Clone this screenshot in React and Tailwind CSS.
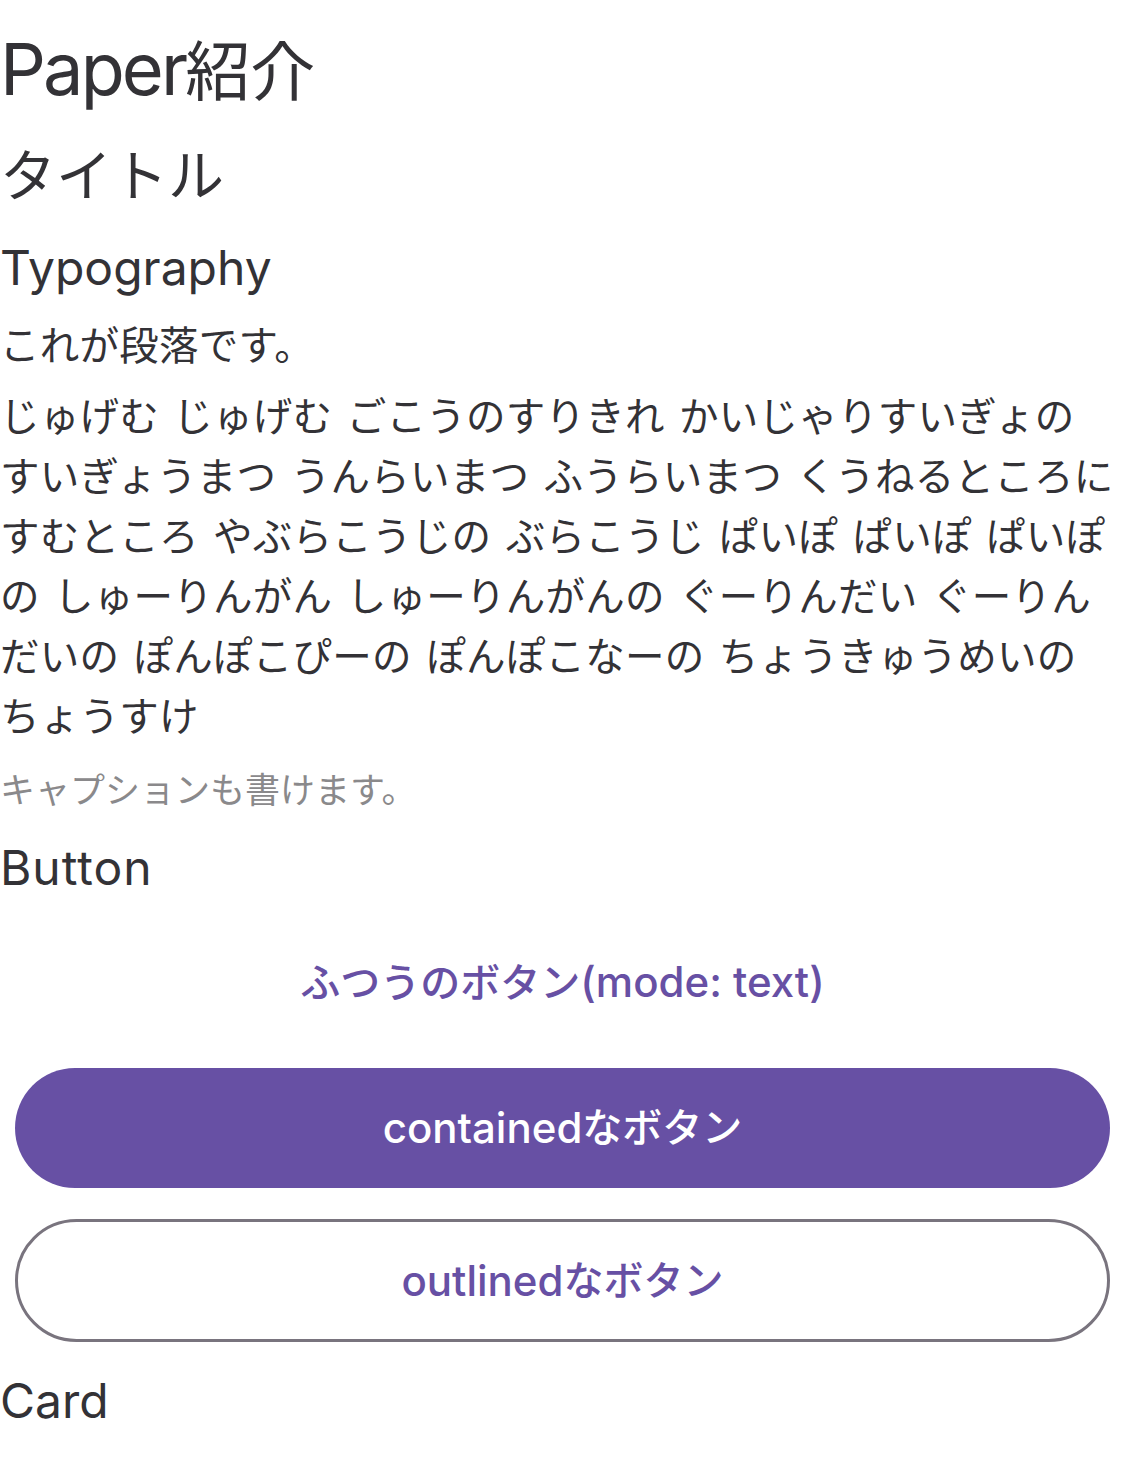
import React from "react";

const bodyLines = [
  "じゅげむ じゅげむ ごこうのすりきれ かいじゃりすいぎょの",
  "すいぎょうまつ うんらいまつ ふうらいまつ くうねるところに",
  "すむところ やぶらこうじの ぶらこうじ ぱいぽ ぱいぽ ぱいぽ",
  "の しゅーりんがん しゅーりんがんの ぐーりんだい ぐーりん",
  "だいの ぽんぽこぴーの ぽんぽこなーの ちょうきゅうめいの",
  "ちょうすけ",
];

function Heading({ children, className = "" }) {
  return (
    <h2 className={`h-[72px] text-[48px] leading-[72px] font-normal ${className}`}>
      {children}
    </h2>
  );
}

export default function App() {
  return (
    <div className="min-h-[1474px] w-full bg-white pt-[21px] font-[Inter,'Noto_Sans_CJK_JP',sans-serif] text-[#333236]">
      <h1 className="h-[96px] whitespace-nowrap text-[72px] leading-[96px] font-normal tracking-[-0.04em]">
        Paper<span className="text-[65px] tracking-normal">紹介</span>
      </h1>

      <h2 className="mt-[14px] h-[90px] text-[56px] leading-[90px] font-normal">タイトル</h2>

      <Heading className="mt-[11px]">Typography</Heading>

      <p className="mt-[12px] h-[60px] text-[39.5px] leading-[60px] tracking-[0.25px]">これが段落です。</p>

      {/* 本文 */}
      <div className="mt-[11px] text-[39.5px] leading-[60px] tracking-[0.25px] [word-spacing:3px]">
        {bodyLines.map((line) => (
          <div key={line} className="h-[60px] whitespace-nowrap">
            {line}
          </div>
        ))}
      </div>

      <p className="mt-[19px] h-[48px] text-[35px] leading-[48px] text-[#8a898b]">
        キャプションも書けます。
      </p>

      <Heading className="mt-[18px] tracking-[0.02em]">Button</Heading>

      <div className="mx-[15px] mt-[18px] flex h-[120px] items-center justify-center">
        <span className="text-[42px] font-medium leading-none text-[#6750a4]">
          <span className="text-[40px]">ふつうのボタン</span>(mode: text)
        </span>
      </div>

      <button className="mx-[15px] mt-[26px] flex h-[120px] w-[1095px] items-center justify-center rounded-full bg-[#6750a4] text-[42px] font-medium leading-none text-white">
        contained<span className="text-[40px]">なボタン</span>
      </button>

      <button className="mx-[15px] mt-[31px] flex h-[123px] w-[1095px] items-center justify-center rounded-full border-[3px] border-[#79747e] bg-white text-[42px] font-medium leading-none text-[#6750a4]">
        outlined<span className="text-[40px]">なボタン</span>
      </button>

      <Heading className="mt-[23px]">Card</Heading>
    </div>
  );
}
